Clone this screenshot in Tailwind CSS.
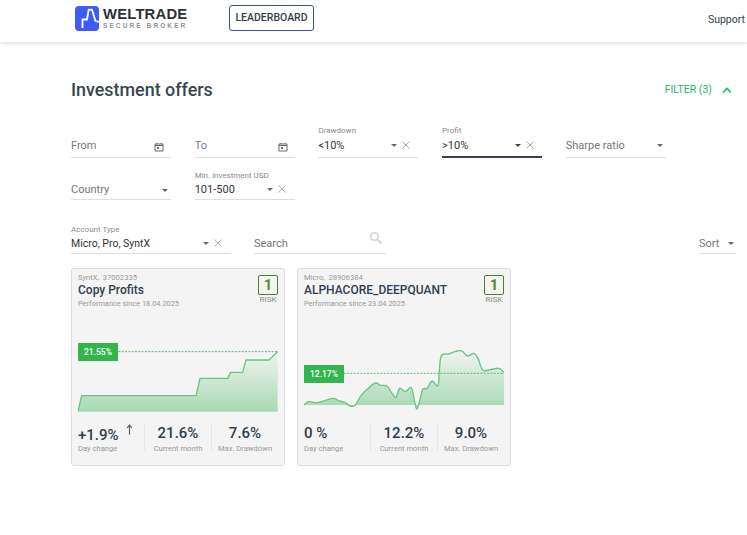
<!DOCTYPE html>
<html lang="en">
<head>
    <meta charset="UTF-8">
    <meta name="viewport" content="width=device-width, initial-scale=1.0">
    <title>Investment offers</title>
    <script src="https://cdn.jsdelivr.net/npm/@tailwindcss/browser@4"></script>
</head>
<body class="bg-white text-[#2f3e4e] font-['Roboto',sans-serif] overflow-hidden">

    <!-- Header -->
    <header class="h-[42px] flex items-start shadow-[0_1px_5px_rgba(0,0,0,0.16)] pl-[75px] pr-[2px]">
        <div class="flex items-center gap-[4px] mt-[6px] w-[154px]">
            <svg width="24" height="25" viewBox="0 0 24 25">
                <rect width="24" height="25" rx="4" fill="#3e5cf5"/>
                <path d="M7.5 22V13.5H12L13.7 3.7H17L20.5 15L24 16" fill="none" stroke="#fff" stroke-width="1.8" stroke-linejoin="round"/>
            </svg>
            <div class="font-['Liberation_Sans',sans-serif]">
                <div class="text-[14.8px] leading-[14px] font-bold text-[#2c3138] tracking-[0.2px]">WELTRADE</div>
                <div class="text-[6.5px] leading-[9px] font-bold text-[#8e9296] tracking-[2.1px] whitespace-nowrap">SECURE BROKER</div>
            </div>
        </div>
        <button class="mt-[5px] w-[85px] h-[26px] border border-[#3b4f94] rounded-[3px] text-[10.5px] font-medium text-[#2f3e4e]">LEADERBOARD</button>
        <a class="ml-auto mt-[13px] text-[10.5px] leading-[13px] text-[#2f3e4e]">Support</a>
    </header>

    <main class="pl-[71px]">
        <!-- Title row -->
        <div class="h-[47px] mb-[23px] flex items-center mt-[24px] pr-[14px]">
            <h1 class="text-[17.9px] font-medium text-[#37474f] mt-[2px]">Investment offers</h1>
            <button class="ml-auto flex items-center gap-[9px] text-[10.5px] text-[#22b85f]">
                FILTER (3)
                <svg width="12" height="8" viewBox="0 0 12 8"><path d="M2 6.5L6 2.5L10 6.5" fill="none" stroke="#22b85f" stroke-width="1.6"/></svg>
            </button>
        </div>

        <!-- Filters -->
        <div class="flex flex-wrap w-[620px] gap-x-[23.7px] gap-y-[0px] -mt-[25px]">
            <div class="w-[100px] h-[47px] flex items-end pb-[4px] border-b border-[#dedede] text-[11px] leading-[13px] text-[#757575]">
                <span class="mb-[1px]">From</span>
                <svg class="ml-auto mr-[7px] mb-[1px]" width="10" height="10" viewBox="0 0 10 10"><path d="M1 2H9V9H1ZM1 3.5H9M3 1V2M7 1V2" fill="none" stroke="#666" stroke-width="1"/><rect x="3" y="5" width="2" height="2" fill="#666"/></svg>
            </div>
            <div class="w-[100px] h-[47px] flex items-end pb-[4px] border-b border-[#dedede] text-[11px] leading-[13px] text-[#6f7f96]">
                <span class="mb-[1px]">To</span>
                <svg class="ml-auto mr-[7px] mb-[1px]" width="10" height="10" viewBox="0 0 10 10"><path d="M1 2H9V9H1ZM1 3.5H9M3 1V2M7 1V2" fill="none" stroke="#666" stroke-width="1"/><rect x="3" y="5" width="2" height="2" fill="#666"/></svg>
            </div>
            <div class="w-[100px] h-[47px] flex flex-col justify-end pb-[4px] border-b border-[#dedede]">
                <span class="text-[8px] leading-[10px] text-[#8a8a8a] mb-[3px]">Drawdown</span>
                <div class="flex items-center text-[11px] leading-[13px] text-[#333] mb-[1px]">
                    &lt;10%
                    <span class="ml-auto mr-[5px] border-x-[3px] border-t-[3px] border-x-transparent border-t-[#666]"></span>
                    <svg class="mr-[8px] -mt-[2px]" width="8" height="8" viewBox="0 0 8 8"><path d="M0.5 0.5L7.5 7.5M7.5 0.5L0.5 7.5" stroke="#aaa" stroke-width="1"/></svg>
                </div>
            </div>
            <div class="w-[100px] h-[47px] flex flex-col justify-end pb-[3px] border-b-2 border-[#3a3f55]">
                <span class="text-[8px] leading-[10px] text-[#8a8a8a] mb-[3px]">Profit</span>
                <div class="flex items-center text-[11px] leading-[13px] text-[#333] mb-[1px]">
                    &gt;10%
                    <span class="ml-auto mr-[5px] border-x-[3px] border-t-[3px] border-x-transparent border-t-[#444]"></span>
                    <svg class="mr-[8px] -mt-[2px]" width="8" height="8" viewBox="0 0 8 8"><path d="M0.5 0.5L7.5 7.5M7.5 0.5L0.5 7.5" stroke="#aaa" stroke-width="1"/></svg>
                </div>
            </div>
            <div class="w-[100px] h-[47px] flex items-end pb-[4px] border-b border-[#dedede] text-[11px] leading-[13px] text-[#757575]">
                <span class="mb-[1px]">Sharpe ratio</span>
                <span class="ml-auto mr-[3px] mb-[6px] border-x-[3px] border-t-[3px] border-x-transparent border-t-[#666]"></span>
            </div>
            <div class="w-[100px] h-[42px] flex items-end pb-[2px] border-b border-[#dedede] text-[11px] leading-[13px] text-[#757575]">
                <span class="mb-[1px]">Country</span>
                <span class="ml-auto mr-[3px] mb-[5px] border-x-[3px] border-t-[3px] border-x-transparent border-t-[#666]"></span>
            </div>
            <div class="w-[100px] h-[42px] flex flex-col justify-end pb-[2px] border-b border-[#dedede]">
                <span class="text-[8px] leading-[10px] text-[#8a8a8a] mb-[2px] whitespace-nowrap">Min. investment USD</span>
                <div class="flex items-center text-[11px] leading-[13px] text-[#333] mb-[1px]">
                    101-500
                    <span class="ml-auto mr-[5px] border-x-[3px] border-t-[3px] border-x-transparent border-t-[#666]"></span>
                    <svg class="mr-[9px] -mt-[2px]" width="8" height="8" viewBox="0 0 8 8"><path d="M0.5 0.5L7.5 7.5M7.5 0.5L0.5 7.5" stroke="#aaa" stroke-width="1"/></svg>
                </div>
            </div>
        </div>

        <!-- Account type, search, sort -->
        <div class="flex items-end h-[54px] pr-[11px]">
            <div class="w-[160px] h-[30px] flex flex-col justify-end pb-[2px] border-b border-[#dedede]">
                <span class="text-[8px] leading-[10px] text-[#8a8a8a] mb-[2px]">Account Type</span>
                <div class="flex items-center text-[10.5px] leading-[13px] text-[#333] mb-[1px]">
                    Micro, Pro, SyntX
                    <span class="ml-auto mr-[5px] border-x-[3px] border-t-[3px] border-x-transparent border-t-[#666]"></span>
                    <svg class="mr-[9px] -mt-[2px]" width="8" height="8" viewBox="0 0 8 8"><path d="M0.5 0.5L7.5 7.5M7.5 0.5L0.5 7.5" stroke="#aaa" stroke-width="1"/></svg>
                </div>
            </div>
            <div class="ml-[23px] w-[132px] h-[30px] flex items-end pb-[2px] border-b border-[#dedede] text-[11px] leading-[13px] text-[#757575]">
                <span class="mb-[1px]">Search</span>
                <svg class="ml-auto mr-[3px] mb-[6px]" width="14" height="14" viewBox="0 0 14 14"><circle cx="5.5" cy="5.5" r="3.8" fill="none" stroke="#d4d4d4" stroke-width="1.6"/><path d="M8.5 8.5L12.5 12.5" stroke="#d4d4d4" stroke-width="2"/></svg>
            </div>
            <div class="ml-auto w-[37px] h-[30px] flex items-end pb-[2px] border-b border-[#dedede] text-[11px] leading-[13px] text-[#757575]">
                <span class="mb-[1px]">Sort</span>
                <span class="ml-auto mr-[2px] mb-[6px] border-x-[3px] border-t-[3px] border-x-transparent border-t-[#666]"></span>
            </div>
        </div>

        <!-- Offer cards -->
        <div class="flex gap-[12px] mt-[14px]">
            <div class="relative w-[214px] h-[198px] bg-[#f4f4f4] border border-[#dcdcdc] rounded-[3px] px-[6px] pt-[4px]">
                <div class="flex justify-between">
                    <div>
                        <div class="text-[7.6px] leading-[10px] text-[#9a9a9a]">SyntX,&nbsp; 37002335</div>
                        <div class="text-[12px] leading-[14px] font-medium text-[#2f3e4e]">Copy Profits</div>
                        <div class="text-[7.4px] leading-[10px] text-[#9a9a9a] mt-[2px]">Performance since 18.04.2025</div>
                    </div>
                    <div class="flex flex-col items-center mt-[2px]">
                        <div class="w-[20px] h-[20px] border border-[#4a7d2c] rounded-[2px] flex items-center justify-center text-[15px] font-bold text-[#5c8f2e]">1</div>
                        <div class="text-[8px] leading-[10px] text-[#8a8a8a]">RISK</div>
                    </div>
                </div>
                <div class="relative h-[90px] mt-[21px]">
                    <svg class="absolute inset-0" width="200" height="90" viewBox="39 195 600 270">
                        <defs>
                            <linearGradient id="fade1" x1="0" y1="0" x2="0" y2="1">
                                <stop offset="0" stop-color="#3cb45c" stop-opacity="0.02"/>
                                <stop offset="1" stop-color="#3cb45c" stop-opacity="0.42"/>
                            </linearGradient>
                        </defs>
                        <path d="M39 440L50 392H393L405 340H488L497 322H533L543 285H612L638 260V440Z" fill="url(#fade1)"/>
                        <path d="M39 440L50 392H393L405 340H488L497 322H533L543 285H612L638 260" fill="none" stroke="#66c581" stroke-width="4" stroke-linejoin="round"/>
                        <path d="M160 260H638" stroke="#3cb45c" stroke-width="2.5" stroke-dasharray="6 4"/>
                    </svg>
                    <div class="absolute left-0 top-[13px] w-[40px] h-[18px] bg-[#33b54e] text-white text-[8.5px] font-medium flex items-center justify-center">21.55%</div>
                </div>
                <div class="flex h-[28px] mt-[3px]">
                    <div class="w-[67px] border-r border-[#e6e6e6]">
                        <div class="flex items-start h-[19px]">
                            <span class="text-[15px] leading-[18px] font-medium text-[#2f3e4e] mt-[3px] whitespace-nowrap">+1.9%</span>
                            <svg class="ml-[7px] mt-[1px]" width="7" height="11" viewBox="0 0 7 11"><path d="M3.5 10.5V1.5M1.2 3.8L3.5 1L5.8 3.8" fill="none" stroke="#4a5561" stroke-width="1.1"/></svg>
                        </div>
                        <div class="text-[7.6px] leading-[10px] text-[#9a9a9a] mt-[2px]">Day change</div>
                    </div>
                    <div class="w-[67px] border-r border-[#e6e6e6] text-center">
                        <div class="text-[15px] leading-[18px] font-medium text-[#2f3e4e] mt-[1px]">21.6%</div>
                        <div class="text-[7.6px] leading-[10px] text-[#9a9a9a] mt-[2px]">Current month</div>
                    </div>
                    <div class="w-[66px] text-center">
                        <div class="text-[15px] leading-[18px] font-medium text-[#2f3e4e] mt-[1px]">7.6%</div>
                        <div class="text-[7.6px] leading-[10px] text-[#9a9a9a] mt-[2px]">Max. Drawdown</div>
                    </div>
                </div>
            </div>

            <div class="relative w-[214px] h-[198px] bg-[#f4f4f4] border border-[#dcdcdc] rounded-[3px] px-[6px] pt-[4px]">
                <div class="flex justify-between">
                    <div>
                        <div class="text-[7.6px] leading-[10px] text-[#9a9a9a]">Micro,&nbsp; 28906384</div>
                        <div class="text-[12px] leading-[14px] font-medium text-[#2f3e4e]">ALPHACORE_DEEPQUANT</div>
                        <div class="text-[7.4px] leading-[10px] text-[#9a9a9a] mt-[2px]">Performance since 23.04.2025</div>
                    </div>
                    <div class="flex flex-col items-center mt-[2px]">
                        <div class="w-[20px] h-[20px] border border-[#4a7d2c] rounded-[2px] flex items-center justify-center text-[15px] font-bold text-[#4f8a2e]">1</div>
                        <div class="text-[8px] leading-[10px] text-[#8a8a8a]">RISK</div>
                    </div>
                </div>
                <div class="relative h-[90px] mt-[21px]">
                    <svg class="absolute inset-0" width="200" height="90" viewBox="36 195 600 270">
                        <defs>
                            <linearGradient id="fade2" x1="0" y1="0" x2="0" y2="1">
                                <stop offset="0" stop-color="#3cb45c" stop-opacity="0.02"/>
                                <stop offset="1" stop-color="#3cb45c" stop-opacity="0.42"/>
                            </linearGradient>
                        </defs>
                        <path id="area2" fill="url(#fade2)"/>
                        <path d="M155 325H636" stroke="#3cb45c" stroke-width="2.5" stroke-dasharray="6 4"/>
                        <path id="line2" fill="none" stroke="#66c581" stroke-width="4" stroke-linejoin="round"/>
                    </svg>
                    <div class="absolute left-0 top-[35px] w-[40px] h-[18px] bg-[#33b54e] text-white text-[8.5px] font-medium flex items-center justify-center">12.17%</div>
                </div>
                <div class="flex h-[28px] mt-[3px]">
                    <div class="w-[67px] border-r border-[#e6e6e6]">
                        <div class="text-[15px] leading-[18px] font-medium text-[#2f3e4e] mt-[1px]">0 %</div>
                        <div class="text-[7.6px] leading-[10px] text-[#9a9a9a] mt-[2px]">Day change</div>
                    </div>
                    <div class="w-[67px] border-r border-[#e6e6e6] text-center">
                        <div class="text-[15px] leading-[18px] font-medium text-[#2f3e4e] mt-[1px]">12.2%</div>
                        <div class="text-[7.6px] leading-[10px] text-[#9a9a9a] mt-[2px]">Current month</div>
                    </div>
                    <div class="w-[66px] text-center">
                        <div class="text-[15px] leading-[18px] font-medium text-[#2f3e4e] mt-[1px]">9.0%</div>
                        <div class="text-[7.6px] leading-[10px] text-[#9a9a9a] mt-[2px]">Max. Drawdown</div>
                    </div>
                </div>
            </div>
        </div>
    </main>

    <script>
        // Smooth the second chart's samples into a path (Catmull-Rom to bezier)
        const pts = [[36,420],[50,410],[75,413],[100,406],[125,400],[140,407],[160,413],[175,423],[190,420],[205,395],[225,373],[250,354],[265,361],[285,363],[300,385],[312,397],[323,370],[340,380],[358,368],[368,410],[375,432],[385,400],[392,373],[405,370],[420,348],[435,363],[440,350],[447,275],[470,267],[495,258],[510,258],[527,273],[545,265],[558,280],[572,315],[595,314],[620,310],[636,322]];
        let d = `M${pts[0][0]} ${pts[0][1]}`;
        for (let i = 0; i < pts.length - 1; i++) {
            const p0 = pts[Math.max(i - 1, 0)], p1 = pts[i], p2 = pts[i + 1], p3 = pts[Math.min(i + 2, pts.length - 1)];
            d += `C${p1[0] + (p2[0] - p0[0]) / 6} ${p1[1] + (p2[1] - p0[1]) / 6} ${p2[0] - (p3[0] - p1[0]) / 6} ${p2[1] - (p3[1] - p1[1]) / 6} ${p2[0]} ${p2[1]}`;
        }
        document.getElementById('line2').setAttribute('d', d);
        document.getElementById('area2').setAttribute('d', d + 'V420H36Z');
    </script>
</body>
</html>
